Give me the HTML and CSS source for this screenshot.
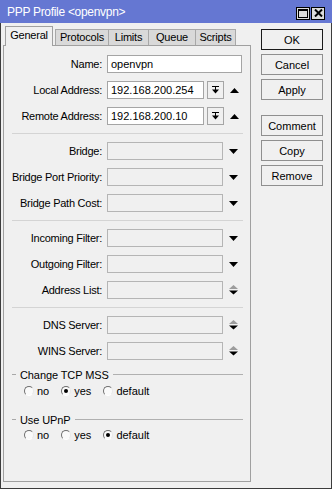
FILE: index.html
```html
<!DOCTYPE html>
<html>
<head>
<meta charset="utf-8">
<link rel="stylesheet" href="styles.css">
</head>
<body>
<div class="win">
  <div class="titlebar">
    <span class="title">PPP Profile &lt;openvpn&gt;</span>
    <div class="tbtns">
      <span class="tbtn"><svg width="10" height="9" viewBox="0 0 10 9"><rect x="0.5" y="0.5" width="9" height="8" fill="none" stroke="#000"/><rect x="0" y="0" width="10" height="2"/></svg></span>
      <span class="tbtn"><svg width="9" height="8" viewBox="0 0 9 8"><path d="M1 0.5L8 7.5M8 0.5L1 7.5" stroke="#000" stroke-width="2"/></svg></span>
    </div>
  </div>
  <div class="main">
    <div class="left">
      <div class="tabs">
        <div class="tab active">General</div>
        <div class="tab t-proto">Protocols</div>
        <div class="tab t-limits">Limits</div>
        <div class="tab t-queue">Queue</div>
        <div class="tab t-scripts">Scripts</div>
      </div>
      <div class="panel">
        <div class="row">
          <span class="lbl">Name:</span>
          <div class="field w-name">openvpn</div>
        </div>
        <div class="row">
          <span class="lbl">Local Address:</span>
          <div class="field w-short">192.168.200.254</div>
          <div class="ddbtn"><svg width="7" height="8" viewBox="0 0 7 8"><rect x="0" y="0" width="7" height="1"/><rect x="3" y="1" width="1" height="3"/><path d="M0 3.5H7L3.5 7.5Z"/></svg></div>
          <span class="ind"><svg width="9" height="5" viewBox="0 0 9 5"><path d="M0 5H9L4.5 0Z"/></svg></span>
        </div>
        <div class="row">
          <span class="lbl">Remote Address:</span>
          <div class="field w-short">192.168.200.10</div>
          <div class="ddbtn"><svg width="7" height="8" viewBox="0 0 7 8"><rect x="0" y="0" width="7" height="1"/><rect x="3" y="1" width="1" height="3"/><path d="M0 3.5H7L3.5 7.5Z"/></svg></div>
          <span class="ind"><svg width="9" height="5" viewBox="0 0 9 5"><path d="M0 5H9L4.5 0Z"/></svg></span>
        </div>
        <div class="sep"></div>
        <div class="row">
          <span class="lbl">Bridge:</span>
          <div class="field w-full dis"></div>
          <span class="ind"><svg width="9" height="5" viewBox="0 0 9 5"><path d="M0 0H9L4.5 5Z"/></svg></span>
        </div>
        <div class="row">
          <span class="lbl">Bridge Port Priority:</span>
          <div class="field w-full dis"></div>
          <span class="ind"><svg width="9" height="5" viewBox="0 0 9 5"><path d="M0 0H9L4.5 5Z"/></svg></span>
        </div>
        <div class="row">
          <span class="lbl">Bridge Path Cost:</span>
          <div class="field w-full dis"></div>
          <span class="ind"><svg width="9" height="5" viewBox="0 0 9 5"><path d="M0 0H9L4.5 5Z"/></svg></span>
        </div>
        <div class="sep"></div>
        <div class="row">
          <span class="lbl">Incoming Filter:</span>
          <div class="field w-full dis"></div>
          <span class="ind"><svg width="9" height="5" viewBox="0 0 9 5"><path d="M0 0H9L4.5 5Z"/></svg></span>
        </div>
        <div class="row">
          <span class="lbl">Outgoing Filter:</span>
          <div class="field w-full dis"></div>
          <span class="ind"><svg width="9" height="5" viewBox="0 0 9 5"><path d="M0 0H9L4.5 5Z"/></svg></span>
        </div>
        <div class="row">
          <span class="lbl">Address List:</span>
          <div class="field w-full dis"></div>
          <span class="ind"><svg width="9" height="10" viewBox="0 0 9 10"><path d="M0 4H9L4.5 0Z" fill="#9c9c9c"/><path d="M0 5.5H9L4.5 9.5Z"/></svg></span>
        </div>
        <div class="sep"></div>
        <div class="row">
          <span class="lbl">DNS Server:</span>
          <div class="field w-full dis"></div>
          <span class="ind"><svg width="9" height="10" viewBox="0 0 9 10"><path d="M0 4H9L4.5 0Z" fill="#9c9c9c"/><path d="M0 5.5H9L4.5 9.5Z"/></svg></span>
        </div>
        <div class="row">
          <span class="lbl">WINS Server:</span>
          <div class="field w-full dis"></div>
          <span class="ind"><svg width="9" height="10" viewBox="0 0 9 10"><path d="M0 4H9L4.5 0Z" fill="#9c9c9c"/><path d="M0 5.5H9L4.5 9.5Z"/></svg></span>
        </div>
        <div class="group">Change TCP MSS</div>
        <div class="radios">
          <span class="ritem"><span class="radio"></span>no</span>
          <span class="ritem"><span class="radio on"></span>yes</span>
          <span class="ritem"><span class="radio"></span>default</span>
        </div>
        <div class="group g2">Use UPnP</div>
        <div class="radios r2">
          <span class="ritem"><span class="radio"></span>no</span>
          <span class="ritem"><span class="radio"></span>yes</span>
          <span class="ritem"><span class="radio on"></span>default</span>
        </div>
      </div>
    </div>
    <div class="btns">
      <div class="btn def">OK</div>
      <div class="btn">Cancel</div>
      <div class="btn">Apply</div>
      <div class="btn gapped">Comment</div>
      <div class="btn">Copy</div>
      <div class="btn">Remove</div>
    </div>
  </div>
</div>
</body>
</html>
```
FILE: styles.css
```css
* { box-sizing: border-box; }
html, body { margin: 0; padding: 0; }
body {
  width: 332px;
  height: 489px;
  overflow: hidden;
  font-family: "Liberation Sans", Arial, sans-serif;
  font-size: 11px;
  color: #000;
  background: #f0f0f0;
}
.win {
  width: 332px;
  height: 489px;
  display: flex;
  flex-direction: column;
  background: #f0f0f0;
  box-shadow: inset 0 0 0 1px #3c3c3c;
}
.titlebar {
  height: 23px;
  flex: none;
  background: #6577d2;
  color: #fff;
  display: flex;
  align-items: center;
  justify-content: space-between;
  padding: 0 7px 0 7px;
  font-size: 12px;
}
.title { letter-spacing: -0.3px; margin-top: 1px; }
.tbtns { display: flex; gap: 1px; margin-top: 3px; }
.tbtn {
  width: 14px;
  height: 13px;
  background: #dcdcdc;
  border: 1px solid #000;
  display: flex;
  align-items: center;
  justify-content: center;
}
.main {
  flex: 1;
  display: flex;
  padding: 0 9px 0 3px;
}
.left {
  width: 248px;
  display: flex;
  flex-direction: column;
  padding-top: 3px;
}
.tabs {
  display: flex;
  align-items: flex-end;
  height: 20px;
  padding-left: 2px;
  margin-bottom: -1px;
  position: relative;
  z-index: 1;
}
.tab {
  height: 16px;
  margin-bottom: 1px;
  border: 1px solid #a8a8a8;
  border-bottom: none;
  background: #d9d9d9;
  text-align: center;
  line-height: 15px;
  letter-spacing: -0.2px;
}
.tab.active {
  height: 20px;
  margin-bottom: 0;
  width: 48px;
  background: #f0f0f0;
  line-height: 17px;
  border-color: #a0a0a0;
}
.t-proto { width: 54px; margin-left: 2px; }
.t-limits { width: 40px; border-left: none; }
.t-queue { width: 47px; border-left: none; }
.t-scripts { width: 40px; border-left: none; }
.panel {
  flex: 1;
  border: 1px solid #a0a0a0;
  background: #f0f0f0;
  padding-top: 9px;
  margin-bottom: 7px;
}
.row {
  display: flex;
  align-items: center;
  height: 18px;
  margin-bottom: 8px;
}
.lbl {
  width: 98px;
  margin-right: 5px;
  text-align: right;
  white-space: nowrap;
  letter-spacing: -0.25px;
}
.field {
  height: 18px;
  border: 1px solid #a5a5a5;
  background: #fff;
  padding: 0 3px;
  line-height: 16px;
  white-space: nowrap;
}
.w-name { width: 135px; }
.w-short { width: 97px; }
.w-full { width: 116px; }
.field.dis { background: #f0f0f0; border-color: #b5b5b5; }
.ddbtn {
  width: 17px;
  height: 18px;
  margin-left: 3px;
  border: 1px solid #a5a5a5;
  background: #f0f0f0;
  display: flex;
  align-items: center;
  justify-content: center;
}
.ind {
  margin-left: 6px;
  width: 9px;
  display: flex;
  align-items: center;
}
.sep {
  height: 1px;
  background: #d4d4d4;
  margin: 1px 7px 8px 8px;
}
.group {
  display: flex;
  align-items: center;
  height: 13px;
  margin: 0 7px 0 8px;
  letter-spacing: -0.1px;
}
.group::before {
  content: "";
  width: 4px;
  height: 1px;
  background: #a8a8a8;
  margin-right: 4px;
}
.group::after {
  content: "";
  flex: 1;
  height: 1px;
  background: #b0b0b0;
  margin-left: 4px;
}
.g2 { margin-top: 16px; }
.radios {
  display: flex;
  align-items: center;
  height: 13px;
  margin-top: 3px;
  padding-left: 20px;
  gap: 12px;
}
.r2 { margin-top: 2px; }
.ritem {
  display: flex;
  align-items: center;
  gap: 3px;
}
.radio {
  width: 10px;
  height: 10px;
  border-radius: 50%;
  border: 1px solid;
  border-color: #6e6e6e #e8e8e8 #ffffff #6e6e6e;
  background: #fafafa;
  display: flex;
  align-items: center;
  justify-content: center;
}
.radio.on::after {
  content: "";
  width: 4px;
  height: 4px;
  border-radius: 50%;
  background: #000;
}
.btns {
  width: 62px;
  margin-left: 10px;
  padding-top: 6px;
  display: flex;
  flex-direction: column;
  gap: 4px;
}
.btn {
  height: 21px;
  border: 1px solid #8f8f8f;
  background: #f0f0f0;
  display: flex;
  align-items: center;
  justify-content: center;
}
.btn.def { border-color: #1a1a1a; }
.btn.gapped { margin-top: 11px; }
```
